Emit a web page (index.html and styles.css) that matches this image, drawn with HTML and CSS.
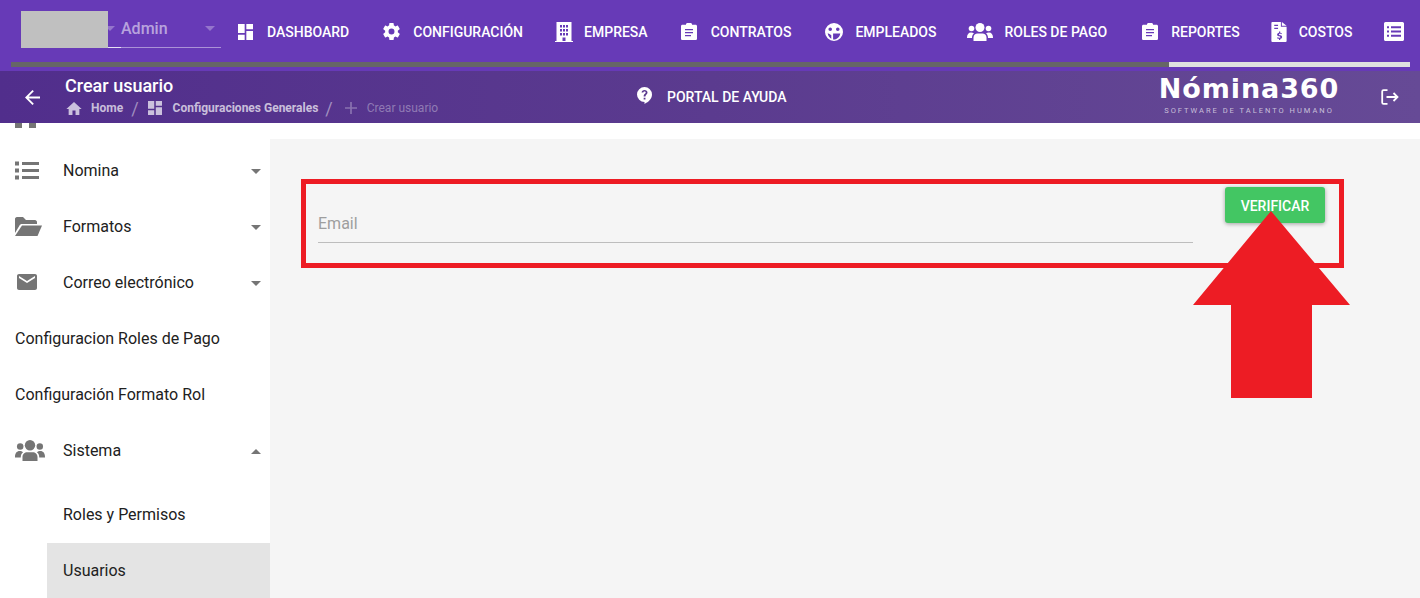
FILE: index.html
```html
<!DOCTYPE html>
<html lang="es">
<head>
<meta charset="utf-8">
<title>Crear usuario</title>
<link rel="stylesheet" href="styles.css">
</head>
<body>
<header class="topbar">
  <div class="nav-row">
    <div class="role-select">
      <div class="role-first"><span class="caret"></span></div>
      <div class="role-second"><span class="role-name">Admin</span><span class="caret"></span></div>
      <div class="redact"></div>
    </div>
    <nav class="nav">
      <a class="nav-item"><svg class="ni i-dash" viewBox="3 3 18 18" preserveAspectRatio="none"><path d="M3 13h8V3H3v10zm0 8h8v-6H3v6zm10 0h8V11h-8v10zm0-18v6h8V3h-8z"/></svg>DASHBOARD</a>
      <a class="nav-item"><svg class="ni i-gear" viewBox="2 2 20 20"><path d="M19.4 13c.05-.33.1-.66.1-1s-.05-.67-.1-1l2.1-1.65c.19-.15.24-.42.12-.64l-2-3.46c-.12-.22-.39-.3-.61-.22l-2.49 1c-.52-.4-1.08-.73-1.69-.98l-.38-2.65A.49.49 0 0 0 14 2h-4c-.25 0-.46.18-.49.42l-.38 2.65c-.61.25-1.17.59-1.69.98l-2.49-1c-.23-.09-.49 0-.61.22l-2 3.46c-.13.22-.07.49.12.64L4.57 11c-.04.33-.07.66-.07 1s.03.67.07 1l-2.11 1.65c-.19.15-.24.42-.12.64l2 3.46c.12.22.39.3.61.22l2.49-1c.52.4 1.08.73 1.69.98l.38 2.65c.03.24.24.42.49.42h4c.25 0 .46-.18.49-.42l.38-2.65c.61-.25 1.17-.59 1.69-.98l2.49 1c.23.09.49 0 .61-.22l2-3.46c.12-.22.07-.49-.12-.64L19.4 13zM12 15.500a3.500 3.500 0 1 1 0-7 3.500 3.500 0 0 1 0 7z"/></svg>CONFIGURACIÓN</a>
      <a class="nav-item"><svg class="ni i-build" viewBox="0 0 18 20" preserveAspectRatio="none"><path fill-rule="evenodd" d="M1.500 0h15v19H18v1H0v-1h1.500V0zM5 3v2.500h2V3H5zm3 0v2.500h2V3H8zm3 0v2.500h2V3h-2zM5 7v2.500h2V7H5zm3 0v2.500h2V7H8zm3 0v2.500h2V7h-2zM5 11v2.500h2V11H5zm3 0v2.500h2V11H8zm3 0v2.500h2V11h-2zM7.500 15.500V19h3v-3.500h-3z"/></svg>EMPRESA</a>
      <a class="nav-item"><svg class="ni i-clip" viewBox="0 0 16 20" preserveAspectRatio="none"><path fill-rule="evenodd" d="M5 2V1.500C5 .7 5.700 0 6.500 0h3c.8 0 1.500.7 1.500 1.500V2h3.500C15.300 2 16 2.700 16 3.500v15c0 .8-.7 1.500-1.500 1.500h-13C.7 20 0 19.300 0 18.500v-15C0 2.700.7 2 1.500 2H5zm-1 5v1.500h8V7H4zm0 3.500V12h8v-1.500H4zM4 14v1.500h6V14H4z"/></svg>CONTRATOS</a>
      <a class="nav-item"><svg class="ni i-face" viewBox="0 0 20 20"><path fill-rule="evenodd" d="M10 0a10 10 0 1 1 0 20 10 10 0 0 1 0-20zM5.800 5a2 2 0 1 0 0 4 2 2 0 0 0 0-4zm8.400 0a2 2 0 1 0 0 4 2 2 0 0 0 0-4zM3 11.500c.3 2.700 2 5 4 6v-3.800c-1.200-1-2.600-1.800-4-2.200zm6 .2v6.600c.4.100.7.100 1 .1 3.300 0 6.300-2.700 7-6.700H9z"/></svg>EMPLEADOS</a>
      <a class="nav-item"><svg class="ni i-group" viewBox="0 0 26 18"><circle cx="13" cy="4.500" r="4.500"/><circle cx="4.500" cy="5.500" r="2.800"/><circle cx="21.500" cy="5.500" r="2.800"/><path d="M6.500 18v-3.500c0-2.500 2-4 4-4h5c2 0 4 1.500 4 4V18h-13zM0 14.500c0-3 1.500-5 4-5 1.200 0 2.300.4 3 1-1.500 1-2 2.500-2 4.500H0zm26 0c0-3-1.500-5-4-5-1.200 0-2.300.4-3 1 1.500 1 2 2.500 2 4.500h5z"/></svg>ROLES DE PAGO</a>
      <a class="nav-item"><svg class="ni i-clip2" viewBox="0 0 16 20" preserveAspectRatio="none"><path fill-rule="evenodd" d="M5 2V1.500C5 .7 5.700 0 6.500 0h3c.8 0 1.500.7 1.500 1.500V2h3.500C15.300 2 16 2.700 16 3.500v15c0 .8-.7 1.500-1.500 1.500h-13C.7 20 0 19.300 0 18.500v-15C0 2.700.7 2 1.500 2H5zm-1 5v1.500h8V7H4zm0 3.500V12h8v-1.500H4zM4 14v1.500h6V14H4z"/></svg>REPORTES</a>
      <a class="nav-item"><svg class="ni i-cost" viewBox="0 0 16 21"><path fill-rule="evenodd" d="M0 1c0-.6.400-1 1-1h9v5h6v15c0 .6-.4 1-1 1H1c-.6 0-1-.4-1-1V1zm11-1 5 4h-5V0zM3 3v1.300h4V3H3zm0 3v1.300h4V6H3zm5 4v1.200c-1.200.2-2 1-2 2 0 2.300 3.400 1.500 3.400 2.700 0 .8-2.300.6-3.200 0v1.300c.5.3 1.100.4 1.800.5V19h1.300v-1.300c1.200-.2 2-1 2-2 0-2.400-3.400-1.600-3.400-2.700 0-.8 1.900-.6 2.900-.1v-1.300c-.5-.2-1-.3-1.500-.4V10H8z"/></svg>COSTOS</a>
      <a class="nav-item"><svg class="ni i-list" viewBox="0 0 20 18" preserveAspectRatio="none"><path fill-rule="evenodd" d="M1.500 0h17c.8 0 1.500.7 1.500 1.500v15c0 .8-.7 1.500-1.500 1.500h-17C.7 18 0 17.300 0 16.500v-15C0 .7.700 0 1.500 0zM3 4v2h2V4H3zm4 0v2h10V4H7zM3 8v2h2V8H3zm4 0v2h10V8H7zm-4 4v2h2v-2H3zm4 0v2h10v-2H7z"/></svg></a>
    </nav>
  </div>
  <div class="progress"><div class="progress-done"></div></div>
</header>

<section class="toolbar">
  <div class="crumbs-area">
    <svg class="back" viewBox="4 4 16 16"><path d="M20 11H7.830l5.590-5.590L12 4l-8 8 8 8 1.410-1.410L7.830 13H20v-2z"/></svg>
    <div class="title-block">
      <h1 class="title">Crear usuario</h1>
      <div class="crumbs">
        <svg class="ci home" viewBox="2 3 20 17"><path d="M10 20v-6h4v6h5v-8h3L12 3 2 12h3v8z"/></svg><span class="crumb">Home</span>
        <span class="sep">/</span>
        <svg class="ci dash" viewBox="3 3 18 18"><path d="M3 13h8V3H3v10zm0 8h8v-6H3v6zm10 0h8V11h-8v10zm0-18v6h8V3h-8z"/></svg><span class="crumb">Configuraciones Generales</span>
        <span class="sep sep2">/</span>
        <svg class="ci plus" viewBox="5 5 14 14"><path d="M19 13h-6v6h-2v-6H5v-2h6V5h2v6h6v2z"/></svg><span class="crumb current">Crear usuario</span>
      </div>
    </div>
  </div>
  <div class="help">
    <svg class="help-icon" viewBox="0 0 16 18"><path fill-rule="evenodd" d="M8 0a8 8 0 0 1 8 8c0 4.500-3.500 8-8 10v-2a8 8 0 0 1 0-16zm-.9 11.500V13.300h1.900v-1.800H7.100zM8 3C6.200 3 5 4.200 4.900 5.800h1.800C6.800 5.100 7.300 4.600 8 4.600c.8 0 1.300.5 1.300 1.200 0 1.300-2.200 1.400-2.200 4.200H9c0-1.900 2.200-2.300 2.200-4.300C11.200 4.200 9.800 3 8 3z"/></svg>
    <span class="help-text">PORTAL DE AYUDA</span>
  </div>
  <div class="brand">
    <div class="brand-name">Nómina360</div>
    <div class="brand-sub">SOFTWARE DE TALENTO HUMANO</div>
  </div>
  <svg class="logout" viewBox="0 0 18 16"><path class="logout-stroke" d="M6.500 1.200H2.600c-.8 0-1.400.6-1.400 1.400v10.800c0 .8.600 1.400 1.400 1.400h3.900"/><path class="logout-stroke" d="M5.500 8h11M12.500 4l4 4-4 4"/></svg>
</section>

<div class="body-row">
  <aside class="sidebar">
    <div class="menu">
      <div class="row"><svg class="mi i-top" viewBox="0 0 21 28"><path fill-rule="evenodd" d="M0 0h21v28h-7v-5H7v5H0z"/></svg></div>
      <div class="row"><svg class="mi i-nom" viewBox="0 0 24 18"><path d="M0 0h4v4H0zM7 .5h17v3H7zM0 7h4v4H0zM7 7.500h17v3H7zM0 14h4v4H0zM7 14.500h17v3H7z"/></svg><span class="label">Nomina</span><span class="arrow"></span></div>
      <div class="row"><svg class="mi i-folder" viewBox="0 0 27 19"><path d="M0 2c0-1 .7-2 2-2h6l3 3h9c1 0 2 1 2 2v2H7c-1.200 0-2 .5-2.500 1.500L0 16V2z"/><path d="M7 8.500h20L22.500 19H0z"/></svg><span class="label">Formatos</span><span class="arrow"></span></div>
      <div class="row"><svg class="mi i-mail" viewBox="2 4 20 16" preserveAspectRatio="none"><path d="M20 4H4c-1.100 0-2 .9-2 2v12c0 1.100.9 2 2 2h16c1.100 0 2-.9 2-2V6c0-1.100-.9-2-2-2zm0 4-8 5-8-5V6l8 5 8-5v2z"/></svg><span class="label">Correo electrónico</span><span class="arrow"></span></div>
      <div class="row"><span class="label">Configuracion Roles de Pago</span></div>
      <div class="row"><span class="label">Configuración Formato Rol</span></div>
      <div class="row"><svg class="mi i-sys" viewBox="0 0 26 18" preserveAspectRatio="none"><circle cx="13" cy="4.500" r="4.500"/><circle cx="4.500" cy="5.500" r="2.800"/><circle cx="21.500" cy="5.500" r="2.800"/><path d="M6.500 18v-3.500c0-2.500 2-4 4-4h5c2 0 4 1.500 4 4V18h-13zM0 14.500c0-3 1.500-5 4-5 1.200 0 2.300.4 3 1-1.500 1-2 2.500-2 4.500H0zm26 0c0-3-1.500-5-4-5-1.200 0-2.300.4-3 1 1.500 1 2 2.500 2 4.500h5z"/></svg><span class="label">Sistema</span><span class="arrow up"></span></div>
      <div class="submenu">
        <div class="subrow"><span class="label">Roles y Permisos</span></div>
        <div class="subrow active"><span class="label">Usuarios</span></div>
      </div>
    </div>
  </aside>
  <main class="main">
    <div class="form">
      <div class="field"><span class="placeholder">Email</span></div>
      <button class="verify" type="button">VERIFICAR</button>
    </div>
    <div class="note-box"></div>
    <svg class="note-arrow" viewBox="0 0 157 187"><path d="M78 0 157 94H119V187H38V94H0z"/></svg>
  </main>
</div>
</body>
</html>
```

FILE: styles.css
```css
* { box-sizing: border-box; }
html, body { margin: 0; height: 100%; overflow: hidden; }
body { font-family: Roboto, "Liberation Sans", sans-serif; background: #fff; color: #212121; }

.topbar { height: 71px; background: #673ab7; padding-top: 11px; position: relative; }
.nav-row { display: flex; height: 51px; padding-left: 21px; }

.role-select { position: relative; display: flex; width: 200px; height: 37px; }
.role-first { width: 100px; display: flex; align-items: center; justify-content: flex-end; padding: 0 6px 2px 0; border-bottom: 1px solid rgba(255,255,255,.85); }
.role-second { flex: 1; display: flex; align-items: center; justify-content: space-between; padding: 0 6px 2px 0; border-bottom: 1px solid rgba(255,255,255,.45); }
.role-name { font-size: 16px; font-weight: 500; color: rgba(255,255,255,.55); }
.caret { width: 0; height: 0; border-left: 5px solid transparent; border-right: 5px solid transparent; border-top: 5px solid rgba(255,255,255,.3); }
.redact { position: absolute; left: 0; top: 0; width: 87px; height: 37px; background: #c0c0c0; }

.nav { display: flex; align-items: center; gap: 32px; margin-left: 17px; height: 41px; white-space: nowrap; }
.nav-item { display: flex; align-items: center; font-size: 14px; font-weight: 500; color: #fff; }
.ni { fill: #fff; flex: none; }
.i-dash { width: 15px; height: 16px; margin-right: 14px; }
.i-gear { width: 17px; height: 17px; margin: 0 13px 0 2px; }
.i-build { width: 18px; height: 20px; margin-right: 11px; }
.i-clip { width: 16px; height: 17px; margin: 0 14px 0 1px; }
.i-face { width: 18px; height: 18px; margin: 0 12px 0 2px; }
.i-group { width: 26px; height: 18px; margin: 0 11px 0 -1px; }
.i-clip2 { width: 16px; height: 17px; margin: 0 13px 0 3px; }
.i-cost { width: 16px; height: 20px; margin: 0 12px 0 -1px; }
.i-list { width: 20px; height: 19px; }

.progress { position: absolute; left: 11px; right: 10px; top: 62px; height: 5px; background: #e0e0e0; }
.progress-done { width: 1158px; height: 100%; background: #666; }

.toolbar { position: relative; height: 52px; display: flex; align-items: center; background: linear-gradient(90deg, #512e8c 0%, #5b3b8f 50%, #664a96 100%); color: #fff; }
.crumbs-area { display: flex; align-items: center; width: 637px; padding-left: 25px; flex: none; }
.back { width: 15px; height: 15px; fill: #fff; margin-right: 25px; flex: none; }
.title-block { display: flex; flex-direction: column; gap: 3px; margin-top: -3px; }
.title { margin: 0; font-size: 18px; line-height: 22px; font-weight: 500; }
.crumbs { display: flex; align-items: center; height: 16px; font-size: 12px; font-weight: 700; color: rgba(255,255,255,.7); white-space: nowrap; }
.ci { flex: none; fill: rgba(255,255,255,.7); }
.home { width: 16px; height: 13px; margin: 0 9px 0 1px; }
.dash { width: 14px; height: 14px; margin-right: 11px; }
.plus { width: 12px; height: 12px; margin-right: 10px; fill: rgba(255,255,255,.3); }
.sep { font-size: 18px; font-weight: 400; margin: 0 9px 0 8px; color: rgba(255,255,255,.45); }
.sep2 { margin: 0 12px 0 7px; }
.current { color: rgba(255,255,255,.35); font-weight: 400; }

.help { display: flex; align-items: center; gap: 15px; width: 523px; flex: none; }
.help-icon { width: 15px; height: 17px; fill: #fff; flex: none; margin-top: -3px; }
.help-text { font-size: 14px; font-weight: 500; }

.brand { width: 178px; flex: none; display: flex; flex-direction: column; align-items: center; gap: 5px; margin-top: -2px; }
.brand-name { font-family: "DejaVu Sans", sans-serif; font-size: 27px; line-height: 24px; font-weight: 700; letter-spacing: .9px; white-space: nowrap; }
.brand-sub { font-size: 7.500px; line-height: 9px; letter-spacing: 2px; color: rgba(255,255,255,.65); white-space: nowrap; }
.logout { width: 18px; height: 16px; margin-left: 43px; flex: none; }
.logout-stroke { fill: none; stroke: #fff; stroke-width: 1.800; }

.body-row { display: flex; height: 475px; }
.sidebar { width: 270px; flex: none; overflow: hidden; background: #fff; }
.menu { margin-top: -37px; }
.row { height: 56px; display: flex; align-items: center; padding-left: 15px; font-size: 16px; color: #212121; position: relative; }
.mi { fill: #757575; flex: none; }
.i-top { width: 21px; height: 28px; }
.i-nom { width: 24px; height: 19px; }
.i-folder { width: 27px; height: 19px; }
.i-mail { width: 20px; height: 16px; margin-left: 2px; }
.i-sys { width: 30px; height: 21px; }
.row .mi + .label { position: absolute; left: 63px; }
.label { white-space: nowrap; }
.arrow { position: absolute; right: 9px; top: 27px; width: 0; height: 0; border-left: 5px solid transparent; border-right: 5px solid transparent; border-top: 5px solid #757575; }
.arrow.up { border-top: 0; border-bottom: 5px solid #757575; }
.submenu { padding: 8px 0 0 47px; }
.subrow { height: 56px; display: flex; align-items: center; padding-left: 16px; font-size: 16px; }
.subrow.active { margin-top: 1px; padding-bottom: 2px; background: #e4e4e4; }

.main { position: relative; flex: 1; margin-top: 16px; background: #f5f5f5; }
.form { display: flex; padding: 48px 0 0 48px; align-items: flex-start; }
.field { width: 875px; height: 48px; margin-top: 8px; padding-top: 17px; border-bottom: 1px solid #bdbdbd; flex: none; }
.placeholder { font-size: 16px; line-height: 24px; color: #9e9e9e; display: block; }
.verify { margin-left: 32px; width: 100px; height: 36px; border: 0; border-radius: 3px; background: #43c663; color: #fff; font: 500 14px Roboto, sans-serif; padding: 1px 0 0; box-shadow: 0 1px 4px rgba(0,0,0,.35); }

.note-box { position: absolute; left: 31px; top: 40px; width: 1043px; height: 89px; border: 5px solid #ed1c24; }
.note-arrow { position: absolute; left: 923px; top: 72px; width: 157px; height: 187px; fill: #ed1c24; }
```
